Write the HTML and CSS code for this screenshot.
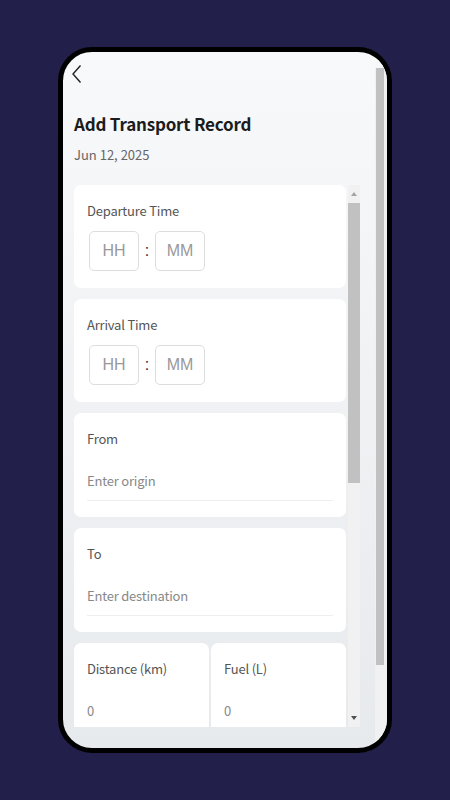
FILE: index.html
```html
<!DOCTYPE html>
<html lang="en">
  <head>
    <meta charset="UTF-8" />
    <meta name="viewport" content="width=device-width, initial-scale=1.0" />
    <title>Add Transport Record</title>
    <link rel="stylesheet" href="styles.css">
  </head>
  <body>
    <div class="phone">
      <div class="screen">
        <div class="content">
          <div class="top-bar">
            <svg class="back" width="12" height="20" viewBox="0 0 12 20">
              <path d="M9.5 1.5 L2 10 L9.5 18.5" fill="none" stroke="#222" stroke-width="1.4" />
            </svg>
          </div>
          <h1>Add Transport Record</h1>
          <p class="date">Jun 12, 2025</p>

          <div class="form-area">
            <div class="cards">
              <div class="card">
                <div class="label">Departure Time</div>
                <div class="time-row">
                  <div class="time-box">HH</div>
                  <span class="colon">:</span>
                  <div class="time-box">MM</div>
                </div>
              </div>
              <div class="card">
                <div class="label">Arrival Time</div>
                <div class="time-row">
                  <div class="time-box">HH</div>
                  <span class="colon">:</span>
                  <div class="time-box">MM</div>
                </div>
              </div>
              <div class="card">
                <div class="label">From</div>
                <div class="text-input">Enter origin</div>
              </div>
              <div class="card">
                <div class="label">To</div>
                <div class="text-input">Enter destination</div>
              </div>
              <div class="split">
                <div class="card half">
                  <div class="label">Distance (km)</div>
                  <div class="num-input">0</div>
                </div>
                <div class="card half">
                  <div class="label">Fuel (L)</div>
                  <div class="num-input">0</div>
                </div>
              </div>
            </div>
            <div class="scrollbar inner-bar">
              <div class="arrow up"></div>
              <div class="thumb"></div>
              <div class="track"></div>
              <div class="arrow down"></div>
            </div>
          </div>
        </div>
        <div class="scrollbar outer-bar">
          <div class="gap"></div>
          <div class="thumb"></div>
          <div class="track"></div>
        </div>
      </div>
    </div>
  </body>
</html>
```

FILE: styles.css
```css
body {
  margin: 0;
  background-color: #221f4b;
  font-family: "Noto Sans CJK SC", "Noto Sans", sans-serif;
}
.phone {
  width: 324px;
  height: 696px;
  margin: 47px auto 0;
  border: 5px solid #000;
  border-radius: 34px;
  overflow: hidden;
  background: linear-gradient(#f8f9fb, #e7eaed);
}
.screen {
  display: flex;
  height: 100%;
}
.content {
  flex: 1;
  padding: 10px 15px 0 11px;
}
.top-bar {
  height: 24px;
  display: flex;
  align-items: center;
}
.back {
  margin-left: -3px;
}
h1 {
  margin: 26px 0 0;
  font-size: 17px;
  line-height: 24px;
  font-weight: bold;
  letter-spacing: -0.2px;
  color: #1c1c1c;
}
.date {
  margin: 9px 0 0;
  font-size: 13px;
  line-height: 20px;
  color: #666;
}
.form-area {
  display: flex;
  gap: 2px;
  height: 542px;
  margin-top: 20px;
  overflow: hidden;
}
.cards {
  flex: 1;
  display: flex;
  flex-direction: column;
  gap: 11px;
}
.card {
  background-color: #fff;
  border-radius: 7px;
  padding: 16px 13px 17px;
  flex-shrink: 0;
}
.label {
  font-size: 13px;
  line-height: 20px;
  letter-spacing: -0.2px;
  color: #555;
}
.time-row {
  display: flex;
  align-items: center;
  margin-top: 10px;
  padding-left: 2px;
}
.time-box {
  width: 48px;
  height: 38px;
  border: 1px solid #ddd;
  border-radius: 5px;
  display: flex;
  align-items: center;
  justify-content: center;
  font-family: "Liberation Sans", Arial, sans-serif;
  font-size: 16px;
  color: #999;
}
.colon {
  width: 16px;
  text-align: center;
  font-family: "Liberation Sans", Arial, sans-serif;
  font-size: 16px;
  color: #333;
}
.text-input,
.num-input {
  height: 40px;
  margin-top: 11px;
  display: flex;
  align-items: center;
  font-size: 13px;
  letter-spacing: -0.2px;
  color: #888;
}
.text-input {
  border-bottom: 1px solid #eee;
}
.card:nth-child(3),
.card:nth-child(4) {
  padding-bottom: 16px;
}
.split {
  display: flex;
  gap: 2px;
  flex-shrink: 0;
}
.half {
  flex: 1;
  height: 90px;
}
.scrollbar {
  display: flex;
  flex-direction: column;
  background-color: #f1f1f1;
}
.thumb {
  background-color: #c1c1c1;
}
.track {
  flex: 1;
}
.inner-bar {
  width: 12px;
}
.inner-bar .thumb {
  height: 280px;
}
.arrow {
  height: 18px;
  display: flex;
  align-items: center;
  justify-content: center;
}
.arrow.up::before {
  content: "";
  border: 3px solid transparent;
  border-top: none;
  border-bottom: 4px solid #a3a3a3;
}
.arrow.down::before {
  content: "";
  border: 3px solid transparent;
  border-bottom: none;
  border-top: 4px solid #505050;
}
.outer-bar {
  width: 12px;
}
.outer-bar .gap {
  height: 16px;
  background-color: #f6f7f9;
}
.outer-bar .thumb {
  height: 597px;
  margin: 0 3px 0 1px;
}
```
